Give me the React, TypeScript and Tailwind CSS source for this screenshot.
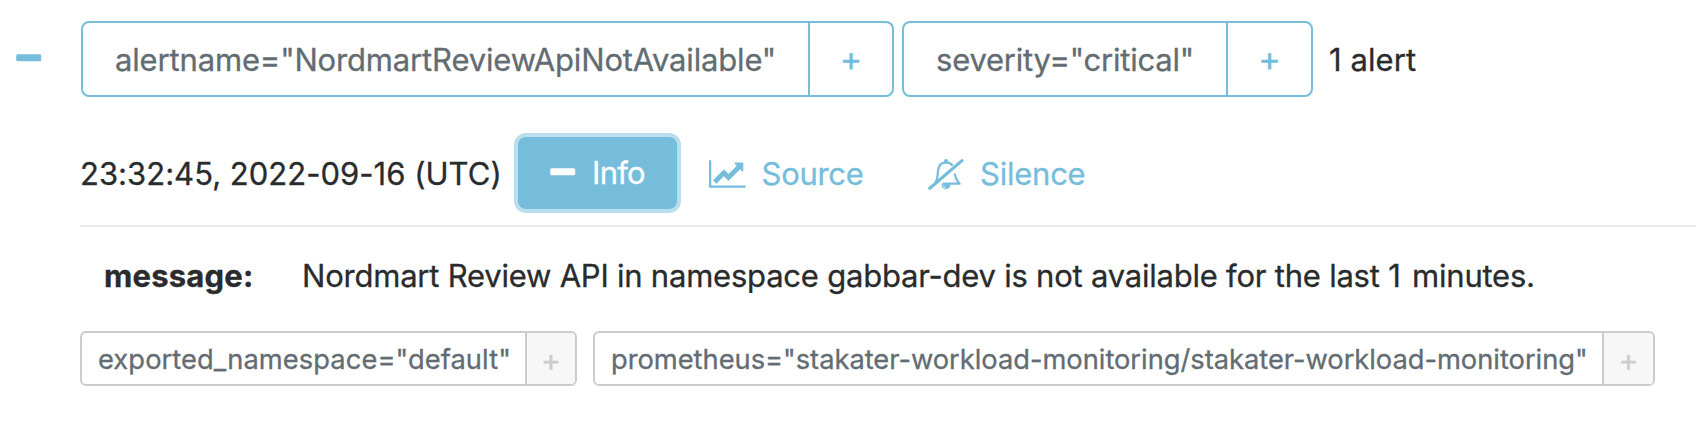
function MinusIcon() {
  return (
    <svg viewBox="0 0 26 8" className="h-2 w-[26px] shrink-0" fill="currentColor">
      <rect x="0.2" y="0.2" width="25" height="7" rx="1.5" />
    </svg>
  );
}

function PlusLabel({ small = false }: { small?: boolean }) {
  return <span className={small ? "text-[30px]" : "text-[34px] font-normal"}>+</span>;
}

function ChartIcon() {
  return (
    <svg viewBox="0 0 2048 1792" className="h-8 w-[36.6px] shrink-0" fill="currentColor">
      <path d="M2048 1536v128h-2048v-1536h128v1408h1920zM1920 288v435q0 21-19.5 29.5t-35.5-7.5l-121-121-633 633q-10 10-23 10t-23-10l-233-233-416 416-192-192 585-585q10-10 23-10t23 10l233 233 464-464-121-121q-16-16-7.500-35.500t29.500-19.500h435q14 0 23 9t9 23z" />
    </svg>
  );
}

function BellSlashIcon() {
  return (
    <svg viewBox="0 0 36 34" className="h-[34px] w-9 shrink-0" fill="none" stroke="currentColor">
      <path d="M1.800 31.300 34 3.600" strokeWidth="3.200" strokeLinecap="round" />
      <path d="M7.600 25.200C9.600 22 9.600 18.600 9.900 14.600 10.300 8.800 13.400 5.600 18 5.400c3 0 5.300 1.200 6.700 3.200" strokeWidth="2.200" />
      <path d="M26.800 17.400C27.600 21.600 29.200 24.200 31.600 26.700H15.500" strokeWidth="2.300" strokeLinejoin="round" strokeLinecap="round" />
      <circle cx="18" cy="3.900" r="2" fill="currentColor" stroke="none" />
      <path d="M13.500 27.200h9a4.500 5 0 0 1-9 0z" fill="currentColor" stroke="none" />
      <path d="M15.500 28.500q.2 2 2.300 2.300" stroke="white" strokeWidth="0.8" />
    </svg>
  );
}

export default function App() {
  return (
    <div className="flex h-[438px] w-[1696px] flex-col overflow-hidden bg-white pt-[21px] font-['Inter',sans-serif] text-[31px] leading-[38px] whitespace-pre text-[#292b2c] [-webkit-text-stroke:0.3px]">
      <div className="flex h-[76px]">
        <div className="w-[81px] pt-[33px] pl-4 text-[#76bddc]">
          <MinusIcon />
        </div>
        <div className="flex w-[813px] rounded-lg border-2 border-[#76bddc]">
          <span className="flex w-[727px] items-center border-r-2 border-[#76bddc] pt-0.5 pl-8 tracking-[-0.16px] text-[#636c72]">
            alertname="NordmartReviewApiNotAvailable"
          </span>
          <span className="flex flex-1 items-center justify-center text-[#76bddc]">
            <PlusLabel />
          </span>
        </div>
        <div className="ml-2 flex w-[411px] rounded-lg border-2 border-[#76bddc]">
          <span className="flex w-[324px] items-center border-r-2 border-[#76bddc] pt-0.5 pl-8 tracking-[-0.22px] text-[#636c72]">
            severity="critical"
          </span>
          <span className="flex flex-1 items-center justify-center text-[#76bddc]">
            <PlusLabel />
          </span>
        </div>
        <span className="flex items-center pt-0.5 pl-4 tracking-[0.08px]">1 alert</span>
      </div>

      <div className="ml-20 flex h-[130px] items-start border-b-2 border-[#ebebeb] pt-10">
        <span className="flex h-[72px] w-[438px] items-center pt-0.5 tracking-[0.02px]">
          23:32:45, 2022-09-16 (UTC)
        </span>
        <button className="flex h-[72px] w-[159px] items-center rounded-lg bg-[#76bddc] pl-8 text-white ring-4 ring-[#badeed]">
          <span className="pb-0.5"><MinusIcon /></span>
          <span className="ml-4 tracking-[-0.7px]">Info</span>
        </button>
        <a className="ml-8 flex h-[72px] w-[219px] items-center pt-0.5 text-[#76bddc]">
          <ChartIcon />
          <span className="ml-4 tracking-[-0.3px]">Source</span>
        </a>
        <a className="flex h-[72px] items-center pt-0.5 text-[#76bddc]">
          <BellSlashIcon />
          <span className="ml-4 tracking-[-0.23px]">Silence</span>
        </a>
      </div>

      <div className="ml-[104px] flex h-[104px] pt-[30px]">
        <span className="w-[198px] font-bold tracking-[0.2px]">message:</span>
        <span className="tracking-[-0.22px]">
          Nordmart Review API in namespace gabbar-dev is not available for the last <span className="mr-[3px]">1</span> minutes.
        </span>
      </div>

      <div className="ml-20 flex h-[55px] text-[27.3px] leading-8">
        <div className="flex w-[497px] overflow-hidden rounded-md border-2 border-[#ccc]">
          <span className="flex w-[445px] items-center border-r-2 border-[#ccc] pt-0.5 pl-4 tracking-[0.07px] text-[#636c72]">
            exported_namespace="default"
          </span>
          <span className="flex flex-1 items-center justify-center bg-[#f7f7f7] pt-0.5 text-[#ccc]">
            <PlusLabel small />
          </span>
        </div>
        <div className="ml-4 flex w-[1062px] overflow-hidden rounded-md border-2 border-[#ccc]">
          <span className="flex w-[1009px] items-center border-r-2 border-[#ccc] pt-0.5 pl-4 tracking-[-0.025px] text-[#636c72]">
            prometheus="stakater-workload-monitoring/stakater-workload-monitoring"
          </span>
          <span className="flex flex-1 items-center justify-center bg-[#f7f7f7] pt-0.5 text-[#ccc]">
            <PlusLabel small />
          </span>
        </div>
      </div>
    </div>
  );
}
